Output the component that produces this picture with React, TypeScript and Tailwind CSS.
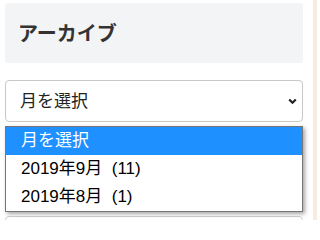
const options = ["月を選択", "2019年9月\u00a0\u00a0(11)", "2019年8月\u00a0\u00a0(1)"];

const Chevron = () => (
  <svg width="9" height="7" viewBox="0 0 9 7" className="text-[#222]">
    <polyline points="1.2,1.5 4.5,4.8 7.8,1.5" fill="none" stroke="currentColor" strokeWidth="2.2" />
  </svg>
);

export default function App() {
  return (
    <div
      className="flex w-[317px] h-[220px] overflow-hidden bg-white"
      style={{ fontFamily: '"Liberation Sans", "Noto Sans CJK JP", sans-serif' }}
    >
      <div className="w-[313px] pl-[5px] pr-[10px] pt-[3px]">
        <div className="h-[60px] bg-[#f3f4f6] rounded-[3px] px-[13px] flex items-center">
          <h2 className="text-[20px] font-bold text-[#333] leading-none mt-[1px]">アーカイブ</h2>
        </div>

        <div className="relative mt-[17px]">
          <div className="h-[42px] border border-[#c8c8c8] rounded-[4px] flex items-center justify-between pl-[14px] pr-[5px] text-[17px] text-[#222]">
            <span className="mt-[2px]">月を選択</span>
            <Chevron />
          </div>

          <ul className="absolute left-0 top-[46px] w-full bg-white border border-[#767676] shadow-[2px_2px_4px_rgba(0,0,0,0.35)] z-10">
            {options.map((o, i) => (
              <li
                key={o}
                className={
                  i === 0
                    ? "h-[28px] flex items-center pl-[15px] text-[17px] bg-[#1e90ff] text-white"
                    : "h-[28px] flex items-center pl-[15px] text-[17px] text-black"
                }
              >
                {o}
              </li>
            ))}
          </ul>

          <div className="mt-[94px] h-[20px] border border-[#d0d0d0] rounded-[4px]"></div>
        </div>
      </div>
      <div className="flex-1 bg-[#f6ece0]"></div>
    </div>
  );
}
